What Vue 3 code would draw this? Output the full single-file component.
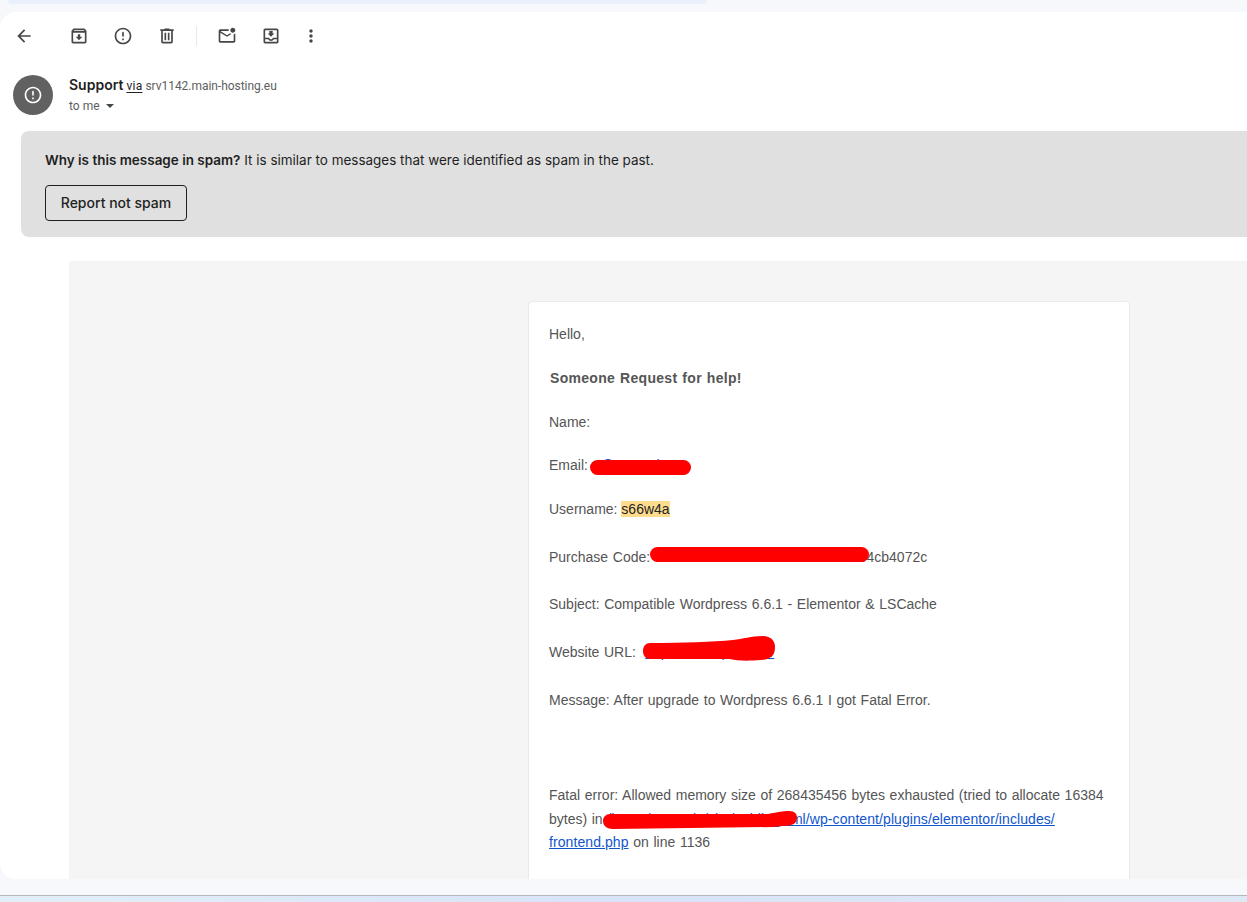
<script setup>
const toolbarGroups = [
  [
    { name: 'archive', d: 'M20.54 5.23l-1.39-1.68C18.88 3.21 18.47 3 18 3H6c-.47 0-.88.21-1.16.55L3.46 5.23C3.17 5.57 3 6.02 3 6.5V19c0 1.1.9 2 2 2h14c1.1 0 2-.9 2-2V6.5c0-.48-.17-.93-.46-1.27zM6.24 5h11.52l.81.97H5.44l.8-.97zM5 19V8h14v11H5zm8.45-9h-2.9v3H8l4 4 4-4h-2.55z' },
    { name: 'report', d: 'M12 7c.55 0 1 .45 1 1v4c0 .55-.45 1-1 1s-1-.45-1-1V8c0-.55.45-1 1-1zm-.01-5C6.47 2 2 6.48 2 12s4.47 10 9.99 10C17.52 22 22 17.52 22 12S17.52 2 11.99 2zM12 20c-4.42 0-8-3.58-8-8s3.58-8 8-8 8 3.58 8 8-3.58 8-8 8zm1-3h-2v-2h2v2z' },
    { name: 'delete', d: 'M15 4V3H9v1H4v2h1v13c0 1.1.9 2 2 2h10c1.1 0 2-.9 2-2V6h1V4h-5zm2 15H7V6h10v13zM9 8h2v9H9zm4 0h2v9h-2z' }
  ],
  [
    { name: 'unread', d: 'M22 8.98V18c0 1.1-.9 2-2 2H4c-1.1 0-2-.9-2-2V6c0-1.1.9-2 2-2h10.1c-.06.32-.1.66-.1 1s.04.68.1 1H4l8 5 3.67-2.29c.47.43 1.02.76 1.63.98L12 13 4 8v10h16V9.9c.74-.15 1.42-.48 2-.92zM16 5c0 1.66 1.34 3 3 3s3-1.34 3-3-1.34-3-3-3-3 1.34-3 3z' },
    { name: 'move', d: 'M19 3H4.99C3.88 3 3.01 3.89 3.01 5L3 19c0 1.1.88 2 1.99 2H19c1.1 0 2-.9 2-2V5c0-1.11-.9-2-2-2zm0 16H5v-3h3.56c.69 1.19 1.97 2 3.45 2s2.75-.81 3.45-2H19v3zm0-5h-4.99c0 1.1-.9 2-2 2s-2-.9-2-2H5V5h14v9zm-3-5h-2V6h-4v3H8l4 4 4-4z' }
  ]
]
</script>

<template>
  <div class="page">
    <div class="search-edge"></div>
    <main class="panel">
      <div class="toolbar">
        <button class="tool back" aria-label="Back">
          <svg viewBox="0 0 24 24"><path d="M20 11H7.83l5.59-5.59L12 4l-8 8 8 8 1.41-1.41L7.83 13H20v-2z" /></svg>
        </button>
        <div class="tool-group">
          <button v-for="t in toolbarGroups[0]" :key="t.name" class="tool" :aria-label="t.name">
            <svg viewBox="0 0 24 24"><path :d="t.d" /></svg>
          </button>
        </div>
        <span class="divider"></span>
        <div class="tool-group">
          <button v-for="t in toolbarGroups[1]" :key="t.name" class="tool" :aria-label="t.name">
            <svg viewBox="0 0 24 24"><path :d="t.d" /></svg>
          </button>
        </div>
        <button class="tool" aria-label="More">
          <svg viewBox="0 0 24 24"><path d="M12 8c1.1 0 2-.9 2-2s-.9-2-2-2-2 .9-2 2 .9 2 2 2zm0 2c-1.1 0-2 .9-2 2s.9 2 2 2 2-.9 2-2-.9-2-2-2zm0 6c-1.1 0-2 .9-2 2s.9 2 2 2 2-.9 2-2-.9-2-2-2z" /></svg>
        </button>
      </div>

      <div class="sender">
        <div class="avatar">
          <svg viewBox="0 0 24 24"><path d="M12 7c.55 0 1 .45 1 1v4c0 .55-.45 1-1 1s-1-.45-1-1V8c0-.55.45-1 1-1zm-.01-5C6.47 2 2 6.48 2 12s4.47 10 9.99 10C17.52 22 22 17.52 22 12S17.52 2 11.99 2zM12 20c-4.42 0-8-3.58-8-8s3.58-8 8-8 8 3.58 8 8-3.58 8-8 8zm1-3h-2v-2h2v2z" /></svg>
        </div>
        <div class="sender-text">
          <div class="from"><strong>Support</strong> <u>via</u> <span>srv1142.main-hosting.eu</span></div>
          <div class="to">to me <i class="caret"></i></div>
        </div>
      </div>

      <section class="spam">
        <p><strong>Why is this message in spam?</strong> It is similar to messages that were identified as spam in the past.</p>
        <button class="not-spam">Report not spam</button>
      </section>

      <section class="mail">
        <article class="card">
          <p>Hello,</p>
          <p class="bold">Someone Request for help!</p>
          <p>Name:</p>
          <p class="has-mark">Email: <a>a@example.eu</a><i class="mark mark-email"></i></p>
          <p class="tall label">Username: <mark>s66w4a</mark></p>
          <p class="tall has-mark">Purchase Code: a8c6e0f4-d12b-4b7f-9c2d-2b0d304cb4072c<i class="mark mark-code"></i></p>
          <p class="tall">Subject: Compatible Wordpress 6.6.1 - Elementor &amp; LSCache</p>
          <p class="tall has-mark">Website URL:&nbsp; <a>https://example.com/</a>
            <svg class="scribble scribble-url" viewBox="0 0 132 25"><path d="M7 7 C40 7 70 6 90 4 C100 3 108 0 120 0 C128 0 132 5 132 11 C132 20 128 23 118 24 C105 25 95 25 87 23 C60 23 30 23 7 23 C2 23 0 19 0 15 C0 10 3 7 7 7Z" /></svg>
          </p>
          <p class="tall">Message: After upgrade to Wordpress 6.6.1 I got Fatal Error.</p>
          <p class="tall">&nbsp;</p>
          <p class="has-mark">Fatal error: Allowed memory size of 268435456 bytes exhausted (tried to allocate 16384 bytes) in <a class="path"><span class="nowrap">/home/example/site/public_html/wp-content/plugins/elementor/includes/</span><br>frontend.php</a> on line 1136
            <svg class="scribble scribble-path" viewBox="0 0 194 18"><path d="M7 3 L165 3 C175 1 180 0 186 0 C192 0 194 3 194 7 C194 12 190 15 180 15 L170 16 L10 18 C3 18 0 14 0 10 C0 6 3 3 7 3Z" /></svg>
          </p>
        </article>
      </section>
    </main>
    <div class="strip"></div>
    <div class="taskbar"></div>
  </div>
</template>

<style>
html, body { margin: 0; overflow: hidden; background: #f6f8fc; }
</style>

<style scoped>
.page {
  width: 1247px;
  height: 902px;
  display: flex;
  flex-direction: column;
  overflow: hidden;
  background: #f6f8fc;
  font-family: Inter, "Liberation Sans", sans-serif;
}
.search-edge {
  flex: none;
  width: 699px;
  height: 4px;
  margin: 0 0 8px 8px;
  background: #eaf1fb;
  border-radius: 0 0 14px 14px;
}
.panel {
  flex: 1;
  min-height: 0;
  overflow: hidden;
  background: #fff;
  border-radius: 16px 0 0 16px;
}
.toolbar {
  height: 48px;
  padding-left: 4px;
  display: flex;
  align-items: center;
}
.tool {
  width: 40px;
  height: 40px;
  padding: 0;
  border: 0;
  background: none;
  display: flex;
  align-items: center;
  justify-content: center;
}
.tool svg { width: 20px; height: 20px; fill: #444746; }
.back { margin-right: 15px; }
.tool-group { display: flex; gap: 4px; }
.divider {
  width: 1px;
  height: 20px;
  margin: 0 10px 0 9px;
  background: #e6e8eb;
}
.sender {
  height: 40px;
  margin-top: 15px;
  padding-left: 13px;
  display: flex;
  gap: 16px;
}
.avatar {
  width: 40px;
  height: 40px;
  border-radius: 50%;
  background: #616161;
  display: flex;
  align-items: center;
  justify-content: center;
}
.avatar svg { width: 20px; height: 20px; fill: #fff; }
.from {
  font-size: 12px;
  line-height: 20px;
  color: #5e5e5e;
  font-family: Roboto, sans-serif;
}
.from strong {
  font-family: Inter, sans-serif;
  font-size: 14px;
  font-weight: 600;
  color: #1f1f1f;
}
.from u { color: #222; text-underline-offset: 2px; letter-spacing: 0.25px; }
.from span { letter-spacing: -0.04px; }
.to {
  font-family: Roboto, sans-serif;
  font-size: 12px;
  line-height: 20px;
  color: #5e5e5e;
}
.caret {
  display: inline-block;
  width: 0;
  height: 0;
  margin: 0 0 2px 3px;
  border: 4px solid transparent;
  border-top: 4px solid #444746;
  border-bottom: 0;
}
.spam {
  height: 106px;
  box-sizing: border-box;
  margin: 16px 0 24px 21px;
  padding: 19px 24px 0;
  background: #e0e0e0;
  border-radius: 8px 0 0 8px;
  color: #1f1f1f;
  font-size: 13.47px;
  line-height: 20px;
}
.spam p { margin: 0 0 15px; }
.spam strong { font-weight: 600; }
.not-spam {
  display: block;
  width: 142px;
  height: 36px;
  padding: 0 0 2px;
  font: 500 14px Inter, sans-serif;
  color: #1f1f1f;
  background: none;
  border: 1px solid #1f1f1f;
  border-radius: 4px;
}
.mail {
  margin-left: 69px;
  padding: 40px 0 0 459px;
  height: 700px;
  background: #f5f5f5;
}
.card {
  box-sizing: border-box;
  width: 602px;
  height: 660px;
  padding: 21px 20px 20px;
  background: #fff;
  border: 1px solid #eaeaea;
  border-radius: 4px;
  font-family: "Liberation Sans", Arial, sans-serif;
  font-size: 14px;
  word-spacing: 0.75px;
  line-height: 23.8px;
  color: #555;
}
.card p { position: relative; margin: 0 0 20px; }
.card p.tall { margin-bottom: 23.8px; }
.card p.label { word-spacing: 0; }
.card .bold { font-weight: 700; letter-spacing: 0.3px; margin-left: 1px; }
.card a { color: #1155cc; text-decoration: underline; }
.card a.path { letter-spacing: 0.08px; }
.card mark { background: #fddc8e; color: #222; }
.nowrap { white-space: nowrap; }
.mark {
  position: absolute;
  display: block;
  background: #fe0000;
  border-radius: 8px;
}
.mark-email { left: 41px; top: 6px; width: 101px; height: 15px; }
.mark-code { left: 101px; top: 1px; width: 219px; height: 15px; }
.scribble {
  position: absolute;
  overflow: visible;
  fill: #fe0000;
}
.scribble-url { left: 94px; top: -5px; width: 132px; height: 25px; }
.scribble-path { left: 54px; top: 27px; width: 194px; height: 18px; }
.strip { flex: none; height: 16px; }
.taskbar {
  flex: none;
  height: 6px;
  border-top: 1px solid #b4b7c0;
  background: linear-gradient(90deg, #e2eff8 0%, #d8e3f8 50%, #dfe9f6 100%);
}
</style>
